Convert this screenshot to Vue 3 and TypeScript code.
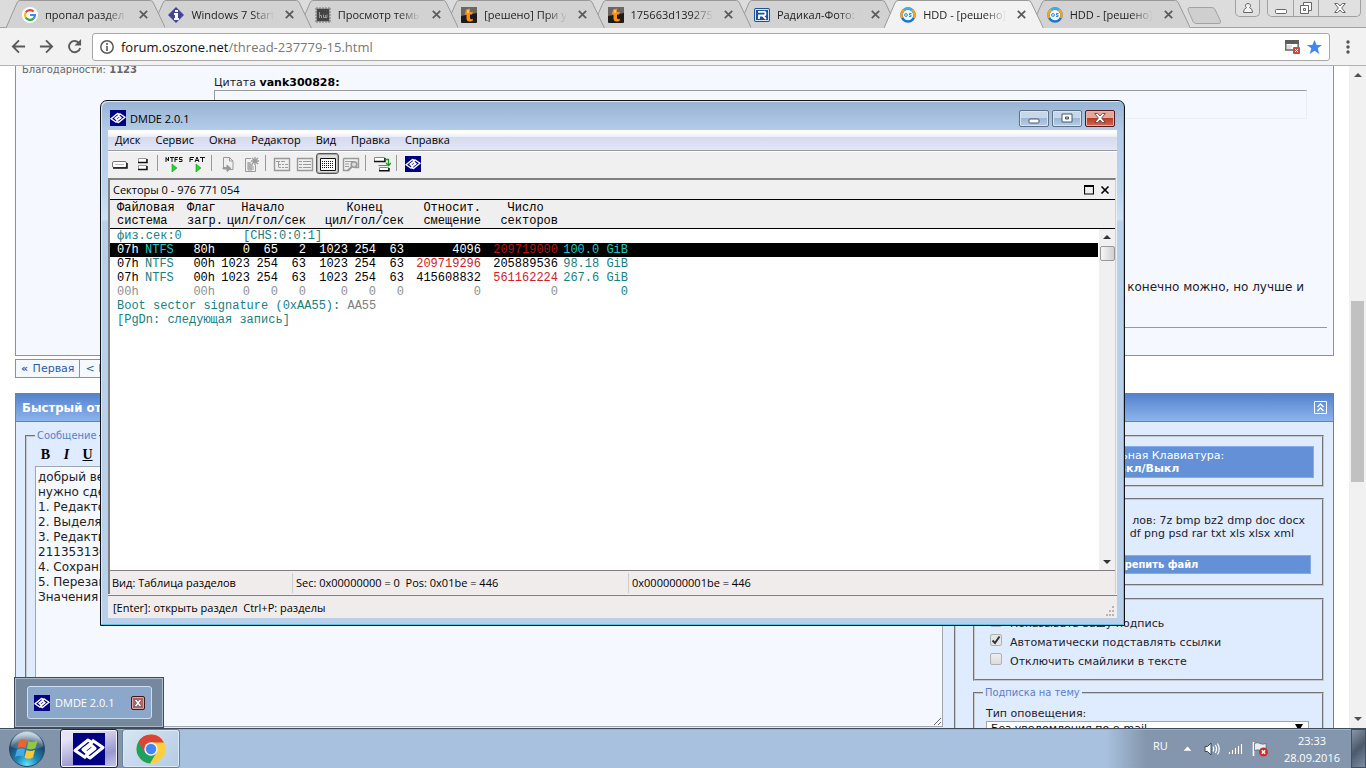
<script setup lang="ts">
import { ref } from 'vue'

interface Tab { title: string; icon: string; active?: boolean }
interface Cell { t: string; c?: string }

const tabs: Tab[] = [
  { title: 'пропал раздел ж', icon: 'google' },
  { title: 'Windows 7 Start', icon: 'info' },
  { title: 'Просмотр темы', icon: 'chip' },
  { title: '[решено] При ус', icon: 'torrent' },
  { title: '175663d139275', icon: 'torrent' },
  { title: 'Радикал-Фото: К', icon: 'radikal' },
  { title: 'HDD - [решено]', icon: 'os', active: true },
  { title: 'HDD - [решено]', icon: 'os' },
]

const menu: string[] = ['Диск', 'Сервис', 'Окна', 'Редактор', 'Вид', 'Правка', 'Справка']

const tools: string[] = [
  'drive', 'drives', '|', 'ntfs', 'fat', '|', 'doc', 'newdoc', '|',
  'tree', 'list', 'grid', 'find', '|', 'transfer', '|', 'logo',
]

const rows: { kind: string; cells: Cell[] }[] = [
  {
    kind: 'selected',
    cells: [{ t: '07h' }, { t: 'NTFS', c: 'fs' }, { t: '80h' }, { t: '0' }, { t: '65' }, { t: '2' }, { t: '1023' }, { t: '254' }, { t: '63' }, { t: '4096' }, { t: '209719000', c: 'bad' }, { t: '100.0 GiB', c: 'size' }],
  },
  {
    kind: '',
    cells: [{ t: '07h' }, { t: 'NTFS', c: 'fs' }, { t: '00h' }, { t: '1023' }, { t: '254' }, { t: '63' }, { t: '1023' }, { t: '254' }, { t: '63' }, { t: '209719296', c: 'bad' }, { t: '205889536' }, { t: '98.18 GiB', c: 'size' }],
  },
  {
    kind: '',
    cells: [{ t: '07h' }, { t: 'NTFS', c: 'fs' }, { t: '00h' }, { t: '1023' }, { t: '254' }, { t: '63' }, { t: '1023' }, { t: '254' }, { t: '63' }, { t: '415608832' }, { t: '561162224', c: 'bad' }, { t: '267.6 GiB', c: 'size' }],
  },
  {
    kind: 'empty',
    cells: [{ t: '00h' }, { t: '' }, { t: '00h' }, { t: '0' }, { t: '0' }, { t: '0' }, { t: '0' }, { t: '0' }, { t: '0' }, { t: '0' }, { t: '0' }, { t: '0', c: 'size' }],
  },
]

const url = ref('forum.oszone.net/thread-237779-15.html')
const message = ref(`добрый вечер
нужно сделать
1. Редактор
2. Выделяем
3. Редактируем
211353130
4. Сохраняем
5. Перезагрузка
Значения`)
const showSignature = ref(false)
const autoLinks = ref(true)
const noSmiles = ref(false)
</script>

<template>
  <div class="screen">
    <svg class="defs" aria-hidden="true">
      <defs>
        <symbol id="dmde" viewBox="0 0 32 32">
          <rect width="32" height="32" fill="#000083" />
          <g fill="none" stroke="#fff" stroke-width="3" stroke-linejoin="round">
            <path d="M13 25 2 17.500 15 7 19 9.500 10 16.500 14 20 21 14.500" />
            <path d="M19 7 30 14.500 17 25 13 22.500 22 15.500 18 12 11 17.500" />
          </g>
        </symbol>
      </defs>
    </svg>

    <header class="tabstrip">
      <nav class="tabs" aria-label="Вкладки">
        <div v-for="(tab, i) in tabs" :key="i" class="tab" :class="{ active: tab.active }" :style="{ zIndex: tab.active ? 20 : 10 - i }">
          <svg class="shape" viewBox="0 0 160 28" preserveAspectRatio="none" aria-hidden="true">
            <path d="M0 28 L11 3 Q12 1 14 1 H145 Q147 1 148 3 L160 28Z" :fill="tab.active ? '#f2f2f2' : '#d2d2d2'" />
            <path d="M0 28 L11 3 Q12 .5 14 .5 H145 Q147 .5 148 3 L160 28" fill="none" stroke="#999" />
          </svg>
          <svg class="favicon" viewBox="0 0 16 16" aria-hidden="true">
            <template v-if="tab.icon === 'google'">
              <circle cx="8" cy="8" r="8" fill="#fff" />
              <g fill="none" stroke-width="2.2">
                <path d="M11.6 4.6A5 5 0 0 0 3.7 5.5" stroke="#ea4335" />
                <path d="M3.7 5.5a5 5 0 0 0 0 5" stroke="#fbbc05" />
                <path d="M3.7 10.500a5 5 0 0 0 7.7 1.100" stroke="#34a853" />
                <path d="M11.400 11.600A5 5 0 0 0 13 8H8" stroke="#4285f4" />
              </g>
            </template>
            <template v-else-if="tab.icon === 'info'">
              <path d="M8 0 16 8 8 16 0 8Z" fill="#45439a" />
              <path d="M7 3h3v2H7zM6 6h4v5h1v2H6v-2h1V8H6z" fill="#fff" />
            </template>
            <template v-else-if="tab.icon === 'chip'">
              <path d="M2 0v16M5 0v16M8 0v16M11 0v16M14 0v16M0 2h16M0 5h16M0 8h16M0 11h16M0 14h16" stroke="#777" />
              <rect x="2" y="2" width="12" height="12" fill="#444" />
              <path d="M4.500 5v6M4.500 8.500h2V11M8.500 7.500V10.500h3.500V7.500M10.500 8v2" fill="none" stroke="#999" />
            </template>
            <template v-else-if="tab.icon === 'torrent'">
              <rect width="16" height="16" rx="1" fill="#1d1a18" />
              <path d="M0 0h16v6L0 9z" fill="#6b6661" />
              <path d="M5 2.500 9 1.500V5h3l-1 2.500H9V11q.5 2 3 .8L11.500 14Q5.500 16 5.500 11V7.500H3.500L4.500 5z" fill="#f78f1e" />
              <path d="M7 3v3" stroke="#fff2c0" />
            </template>
            <template v-else-if="tab.icon === 'radikal'">
              <rect y="1" width="16" height="14" rx="2" fill="#1d5294" />
              <path d="M1.500 2.500h13v11h-13z" fill="none" stroke="#dce6f2" />
              <path d="M5 12V8.500h5q1.500 0 1.500-2T10 4.800H4M8.500 8.500 12 12" fill="none" stroke="#fff" stroke-width="1.800" />
            </template>
            <template v-else>
              <circle cx="8" cy="8" r="6.500" fill="#eef7fd" stroke="#1976c9" stroke-width="2.500" />
              <path d="M1.500 8a6.500 6.500 0 0 1 13 0" fill="none" stroke="#3bb0e5" stroke-width="2.500" />
              <path d="M2.200 11A6.500 6.500 0 0 1 4 2.800M12 2.800a6.500 6.500 0 0 1 1.800 8.200" fill="none" stroke="#f9a11b" stroke-width="2.500" />
              <circle cx="6" cy="8" r="1.400" fill="none" stroke="#3a88c8" />
              <path d="M11.500 6.500H9.500V8h1.500v1.500H9" fill="none" stroke="#3a88c8" />
            </template>
          </svg>
          <span class="tab-title">{{ tab.title }}</span>
          <button class="tab-close" aria-label="Закрыть вкладку">
            <svg viewBox="0 0 9 9"><path d="M.8.8 8.200 8.200M8.200.8.8 8.200" stroke="#5a5a5a" stroke-width="1.700" /></svg>
          </button>
        </div>
      </nav>
      <button class="newtab" aria-label="Новая вкладка">
        <svg viewBox="0 0 35 17"><path d="M3 .5H25Q27 .5 28 2.500L33.500 14Q34 16.500 32 16.500H9Q7 16.500 6 14.500L1 3Q.5.500 3 .5Z" fill="#cfcfcf" stroke="#a3a3a3" /></svg>
      </button>
      <div class="win-controls">
        <button class="user" aria-label="Профиль">
          <svg viewBox="0 0 12 12"><path d="M6 1.500a2.300 2.300 0 0 1 1.500 4.200Q10.500 6.500 10.500 10.500H1.500Q1.500 6.500 4.500 5.700A2.300 2.300 0 0 1 6 1.500Z" fill="#f4f4f4" stroke="#666" /></svg>
        </button>
        <div class="group">
          <button aria-label="Свернуть"><svg viewBox="0 0 12 12"><rect x=".5" y="7.500" width="11" height="4" rx="1" fill="#fff" stroke="#666" /></svg></button>
          <button aria-label="Восстановить"><svg viewBox="0 0 12 12"><path d="M3.500.500h8v8h-8z" fill="#fff" stroke="#666" /><path d="M.5 3.500h8v8h-8zM3.500 6.500h2v2h-2z" fill="#fff" stroke="#666" /></svg></button>
          <button class="wide" aria-label="Закрыть"><svg viewBox="0 0 12 12"><path d="M.7 1.500h3L6 4l2.300-2.500h3L7.600 6l3.700 4.500h-3L6 8l-2.300 2.500h-3L4.400 6Z" fill="#fff" stroke="#666" /></svg></button>
        </div>
      </div>
    </header>

    <div class="toolbar">
      <button aria-label="Назад"><svg viewBox="0 0 16 16"><path d="M15 8H2.500M8.500 1.500 2 8l6.500 6.500" fill="none" stroke="#5a5a5a" stroke-width="2" /></svg></button>
      <button aria-label="Вперёд"><svg viewBox="0 0 16 16"><path d="M1 8h12.500M7.500 1.500 14 8l-6.500 6.500" fill="none" stroke="#5a5a5a" stroke-width="2" /></svg></button>
      <button aria-label="Обновить"><svg viewBox="0 0 16 16"><path d="M13 4.500A6 6 0 1 0 14 9.500" fill="none" stroke="#5a5a5a" stroke-width="2" /><path d="M15 0v7H8z" fill="#5a5a5a" /></svg></button>
      <div class="omnibox">
        <svg class="info" viewBox="0 0 14 14" aria-hidden="true"><circle cx="7" cy="7" r="6.200" fill="none" stroke="#5a5a5a" stroke-width="1.500" /><path d="M7 3v2M7 6v5" stroke="#5a5a5a" stroke-width="1.600" /></svg>
        <a class="url" href="#" :aria-label="url"><span>forum.oszone.net</span>/thread-237779-15.html</a>
        <svg class="popup" viewBox="0 0 15 14" aria-hidden="true"><path d="M.8 1h12.400v9H.8z" fill="#fff" stroke="#666" stroke-width="1.500" /><path d="M0 0h14v4H0z" fill="#5c5c5c" /><path d="M2 6h5M2 8h4" stroke="#bbb" /><rect x="8" y="7" width="7" height="7" rx="1" fill="#d3453d" /><path d="m10 9 3 3m0-3-3 3" stroke="#fff" /></svg>
        <svg class="star" viewBox="0 0 15 14" aria-hidden="true"><path d="m7.500 0 2.100 5H15l-4.300 3.300L12.300 14 7.500 10.700 2.700 14l1.600-5.700L0 5h5.400Z" fill="#4285f4" /></svg>
      </div>
      <button class="more" aria-label="Меню"><svg viewBox="0 0 4 14"><circle cx="2" cy="2" r="1.700" /><circle cx="2" cy="7" r="1.700" /><circle cx="2" cy="12" r="1.700" /></svg></button>
    </div>

    <div class="viewport">
      <main class="forum">
        <article class="post">
          <aside>Благодарности: <b>1123</b></aside>
          <div class="post-body">
            <p>Цитата <b>vank300828:</b></p>
            <blockquote></blockquote>
            <p class="tail">конечно можно, но лучше и</p>
            <hr />
          </div>
        </article>
        <nav class="pager" aria-label="Страницы"><a href="#"><b>«</b> Первая</a><a href="#">&lt; Предыдущая</a></nav>
        <section class="reply">
          <h2>Быстрый ответ
            <button aria-label="Свернуть форму"><svg viewBox="0 0 13 13"><path d="M.5.500h12v12H.5z" fill="none" stroke="#fff" /><path d="m3.500 6 3-3 3 3M3.500 10l3-3 3 3" fill="none" stroke="#fff" stroke-width="1.300" /></svg></button>
          </h2>
          <form class="reply-grid" @submit.prevent>
            <fieldset class="compose">
              <legend><label for="msg">Сообщение</label></legend>
              <div class="format"><button type="button"><b>B</b></button><button type="button"><i>I</i></button><button type="button"><u>U</u></button></div>
              <textarea id="msg" v-model="message" spellcheck="false"></textarea>
            </fieldset>
            <div class="options">
              <fieldset class="kbd">
                <button type="button">Виртуальная Клавиатура:<b>Вкл/Выкл</b></button>
              </fieldset>
              <fieldset class="files">
                <p>лов: 7z bmp bz2 dmp doc docx</p>
                <p class="second">df png psd rar txt xls xlsx xml</p>
                <button type="button">Прикрепить файл</button>
              </fieldset>
              <fieldset class="checks">
                <label><input v-model="showSignature" type="checkbox" />Показывать вашу подпись</label>
                <label><input v-model="autoLinks" type="checkbox" />Автоматически подставлять ссылки</label>
                <label><input v-model="noSmiles" type="checkbox" />Отключить смайлики в тексте</label>
              </fieldset>
              <fieldset class="subscribe">
                <legend>Подписка на тему</legend>
                <label for="notify">Тип оповещения:</label>
                <div class="select">
                  <select id="notify"><option>Без уведомления по e-mail</option></select>
                  <svg viewBox="0 0 8 7" aria-hidden="true"><path d="M0 0h8L4 7z" /></svg>
                </div>
              </fieldset>
            </div>
          </form>
        </section>
      </main>
      <div class="page-scroll" aria-hidden="true">
        <svg viewBox="0 0 8 4"><path d="M4 0 8 4H0z" /></svg>
        <div class="track"><div class="thumb"></div></div>
        <svg viewBox="0 0 8 4"><path d="M0 0h8L4 4z" /></svg>
      </div>
    </div>

    <footer class="taskbar">
      <button class="start" aria-label="Пуск">
        <svg viewBox="0 0 38 38">
          <defs>
            <radialGradient id="orb" cx=".5" cy=".95" r=".9"><stop offset="0" stop-color="#5fe3fa" /><stop offset=".35" stop-color="#1b88b8" /><stop offset=".75" stop-color="#1b4569" /><stop offset="1" stop-color="#8fb0c8" /></radialGradient>
            <linearGradient id="gloss" x1="0" y1="0" x2="0" y2="1"><stop offset="0" stop-color="#fff" stop-opacity=".6" /><stop offset="1" stop-color="#fff" stop-opacity=".1" /></linearGradient>
          </defs>
          <circle cx="19" cy="19" r="17.500" fill="url(#orb)" stroke="#2d4862" />
          <path d="M3 17a16 16 0 0 1 32 0q-16 5-32 0Z" fill="url(#gloss)" />
          <path d="M11 10.500q4-2.500 8 0L17.500 18q-4-2-8 0Z" fill="#f0622a" />
          <path d="M20.500 11q4 2 9-.5L27.500 18q-4 2.500-8.500.5Z" fill="#93c83e" />
          <path d="M9 19.500q4-2 8 0L15.500 27q-4-2.500-8.500 0Z" fill="#47a8e8" />
          <path d="M18.500 20q4.500 2 8.500-.3L25 27.500q-4 2.500-8.500 0Z" fill="#fdc82f" />
        </svg>
      </button>
      <button class="task dmde" aria-label="DMDE 2.0.1"><svg viewBox="0 0 32 32"><use href="#dmde" /></svg></button>
      <button class="task" aria-label="Google Chrome">
        <svg viewBox="0 0 32 32">
          <circle cx="16" cy="16" r="14.500" fill="#fdcf3e" />
          <path d="M3.400 8.800A14.500 14.500 0 0 0 15 30.500L21.500 19.500 16 16Z" fill="#1aa260" />
          <path d="M3.400 8.800 9.800 19.500 16 16V9.400h12.900A14.500 14.500 0 0 0 3.400 8.800Z" fill="#db4437" />
          <circle cx="16" cy="16" r="6.700" fill="#f4f4f4" /><circle cx="16" cy="16" r="5.200" fill="#4285f4" />
        </svg>
      </button>
      <div class="tray">
        <span class="lang">RU</span>
        <svg class="up" viewBox="0 0 9 5"><path d="M4.500 0 9 5H0z" fill="#fff" stroke="#566" stroke-width=".4" /></svg>
        <svg class="ti" viewBox="0 0 16 16"><path d="M1 5.500h2.500L7 2v12l-3.500-3.500H1z" fill="#fff" stroke="#3b4653" /><path d="M9 5.500q1.500 2.500 0 5M11.300 4q2.500 4 0 8M13.500 2.500q3.500 5.500 0 11" fill="none" stroke="#fff" stroke-width="1.200" /></svg>
        <svg class="ti" viewBox="0 0 16 16"><path d="M.5 10.500h2v3h-2zM3.500 8.500h2v5h-2zM6.500 6.500h2v7h-2zM9.500 4.500h2v9h-2zM12.500 2.500h2v11h-2z" fill="#fff" stroke="#45505e" stroke-width=".4" /></svg>
        <svg class="ti" viewBox="0 0 16 16"><path d="M1.500 1v14" stroke="#fff" stroke-width="1.600" /><path d="M2.500 2.500q3-1.500 5.500 0t6 0v7q-3 1.500-5.500 0t-6 0Z" fill="#e8eef4" stroke="#4d5866" stroke-width=".6" /><circle cx="11.500" cy="11" r="4.500" fill="#d42a2a" /><path d="m9.800 9.300 3.400 3.400m0-3.400-3.400 3.400" stroke="#fff" stroke-width="1.400" /></svg>
        <time>23:33<br />28.09.2016</time>
      </div>
      <button class="show-desktop" aria-label="Свернуть все окна"></button>
    </footer>

    <section class="window" aria-label="DMDE 2.0.1">
      <div class="titlebar">
        <svg class="logo16" viewBox="0 0 32 32"><use href="#dmde" /></svg>
        <h1>DMDE 2.0.1</h1>
        <button aria-label="Свернуть"><svg viewBox="0 0 12 12"><rect x="1" y="7" width="10" height="4" rx="1" fill="#fff" stroke="#4a5568" /></svg></button>
        <button aria-label="Развернуть"><svg viewBox="0 0 12 12"><path d="M1 2h10v8H1zM4.500 5h3v2h-3z" fill="#fff" fill-rule="evenodd" stroke="#4a5568" /></svg></button>
        <button class="close" aria-label="Закрыть"><svg viewBox="0 0 12 12"><path d="M.7 1.500h3L6 4l2.300-2.500h3L7.600 6l3.700 4.500h-3L6 8l-2.300 2.500h-3L4.400 6Z" fill="#fff" stroke="#5d3535" stroke-width=".8" /></svg></button>
      </div>
      <div class="client">
        <nav class="menubar"><button v-for="m in menu" :key="m">{{ m }}</button></nav>
        <div class="tools" role="toolbar" aria-label="Инструменты">
          <template v-for="(t, i) in tools" :key="i">
            <span v-if="t === '|'" class="sep"></span>
            <button v-else :class="{ pressed: t === 'grid' }" :aria-label="t">
              <svg v-if="t === 'logo'" class="mark" viewBox="0 0 32 32"><use href="#dmde" /></svg>
              <svg v-else viewBox="0 0 18 16">
                <g v-if="t === 'drive'"><rect x="1.500" y="5.500" width="14" height="6" rx="1.500" fill="#fff" stroke="#777" /><path d="M2 12h14V7" fill="none" stroke="#111" stroke-width="1.500" /><path d="M4 8.500h9" stroke="#b5c0b5" /></g>
                <g v-else-if="t === 'drives'"><path d="M4.500 2.500h8v4h-8zM4.500 9.500h8v4h-8z" fill="#fff" stroke="#999" /><path d="M4 6.500h9V3M4 13.500h9V10" fill="none" stroke="#111" stroke-width="1.500" /></g>
                <g v-else-if="t === 'ntfs'"><path d="M1 6V1.500L3.500 5V1M5 1.500h4M7 1.500V6M10 6V1.500h3M10 3.500h2.500M17.500 1.500h-3v2h2.500v2h-3" fill="none" stroke="#111" /><path d="m7 8 5 4-5 4z" fill="#1fdc2a" stroke="#167a1d" stroke-width=".5" /></g>
                <g v-else-if="t === 'fat'"><path d="M2 6V1.500h4M2 3.500h3M7 6 9 1l2 5M8 4.500h2.500M12 1.500h5M14.500 1.500V6" fill="none" stroke="#111" /><path d="m8 8 5 4-5 4z" fill="#1fdc2a" stroke="#167a1d" stroke-width=".5" /></g>
                <g v-else-if="t === 'doc'" fill="none" stroke="#999"><path d="M4.500 11V1.500h6l3.500 3.500v8.500h-4" /><path d="M10.500 1.500V5H14" /><path d="M4 11.500h4V9l4 3.500-4 3v-2.500H4Z" fill="#999" /></g>
                <g v-else-if="t === 'newdoc'" fill="none" stroke="#999"><path d="M9 2.500H3.500v13h10V9" /><path d="M13 1v8M9 5h8M10 2l6 6M16 2l-6 6" stroke-width="1.300" /><path d="M5 7h4M5 9h6M5 11h7M5 13h7M7 6v9M9 8v7" /></g>
                <g v-else-if="t === 'tree'" fill="none" stroke="#999"><path d="M1.500 2.500h15v12h-15z" stroke-width="1.400" /><path d="M3 5.500h4M8 5.500h4M5.500 6v5.500M6 8.500h2M6 11.500h2M9 8.500h2M9 11.500h2M12 8.500h3M12 11.500h3" /></g>
                <g v-else-if="t === 'list'" fill="none" stroke="#999"><path d="M1.500 2.500h15v12h-15z" stroke-width="1.400" /><path d="M3 5.500h3M7 5.500h8M3 8.500h3M7 8.500h8M3 11.500h3M7 11.500h8" /></g>
                <g v-else-if="t === 'grid'" fill="none" stroke="#111"><rect x="1" y="2" width="16" height="13" fill="#fff" stroke="none" /><path d="M1.500 2.500h15v12h-15z" /><path d="M3 5.500h12M3 7.500h12M3 9.500h12M3 11.500h12" stroke-dasharray="1 1" /></g>
                <g v-else-if="t === 'find'" fill="none" stroke="#999"><path d="M1.500 2.500h15v9h-4M1.500 2.500v12H7" stroke-width="1.400" /><path d="M3 5.500h8M3 8h4M3 10.500h4" /><circle cx="12" cy="8.500" r="2.800" fill="#ddd" stroke-width="1.600" /><path d="m10 10.500-4 4" stroke-width="2.200" /></g>
                <g v-else><path d="M1.500 1.500h10v4h-10zM6.500 11.500h9v3h-9z" fill="#fff" stroke="#888" /><path d="M1 5.500h11V2M6 14.700h10V12" fill="none" stroke="#111" stroke-width="1.500" /><path d="M12 3.500h3.500V9M13 7l2.500 2.500L18 7" fill="none" stroke="#1a991f" stroke-width="1.300" /><path d="M5.500 9.500h9" stroke="#777" /></g>
              </svg>
            </button>
          </template>
        </div>
        <div class="pane">
          <div class="pane-title">
            <span>Секторы 0 - 976 771 054</span>
            <button aria-label="Развернуть панель"><svg viewBox="0 0 10 10"><path d="M.5.500h9v8.500h-9zM0 1.500h10" fill="none" stroke="#000" stroke-width="1.200" /></svg></button>
            <button aria-label="Закрыть панель"><svg viewBox="0 0 10 10"><path d="m1.500 1.500 7 7m0-7-7 7" stroke="#000" stroke-width="1.600" /></svg></button>
          </div>
          <div class="sectors">
            <table>
              <colgroup>
                <col class="w35" /><col class="w42" /><col class="w28" />
                <col class="w35" /><col class="w28" /><col class="w28" />
                <col class="w42" /><col class="w28" /><col class="w28" />
                <col class="w77" /><col class="w77" /><col class="w70" /><col />
              </colgroup>
              <thead>
                <tr>
                  <th colspan="2" class="left">Файловая<br />система</th>
                  <th class="left">Флаг<br />загр.</th>
                  <th colspan="3">Начало&nbsp;&nbsp;&nbsp;<br />цил/гол/сек</th>
                  <th colspan="3">Конец&nbsp;&nbsp;&nbsp;<br />цил/гол/сек</th>
                  <th>Относит.<br />смещение</th>
                  <th>Число&nbsp;&nbsp;<br />секторов</th>
                  <th colspan="2"></th>
                </tr>
              </thead>
              <tbody>
                <tr class="note"><td colspan="3">физ.сек:0</td><td colspan="10" class="chs">[CHS:0:0:1]</td></tr>
                <tr v-for="(r, i) in rows" :key="i" :class="r.kind">
                  <td v-for="(c, j) in r.cells" :key="j" :class="c.c">{{ c.t }}</td>
                  <td></td>
                </tr>
                <tr class="note"><td colspan="13">Boot sector signature (0xAA55): <span>AA55</span></td></tr>
                <tr class="note"><td colspan="13">[PgDn: следующая запись]</td></tr>
              </tbody>
            </table>
            <div class="pane-scroll" aria-hidden="true">
              <svg viewBox="0 0 8 4"><path d="M4 0 8 4H0z" /></svg>
              <div class="thumb"></div>
              <svg viewBox="0 0 8 4"><path d="M0 0h8L4 4z" /></svg>
            </div>
          </div>
          <div class="pane-status"><span>Вид: Таблица разделов</span><span>Sec: 0x00000000 = 0&nbsp; Pos: 0x01be = 446</span><span>0x0000000001be = 446</span></div>
        </div>
        <div class="statusbar">[Enter]: открыть раздел&nbsp; Ctrl+P: разделы
          <svg viewBox="0 0 10 10" aria-hidden="true"><path d="M7 0h2v2H7zM4 4h2v2H4zM7 4h2v2H7zM1 8h2v2H1zM4 8h2v2H4zM7 8h2v2H7z" fill="#b9b4b4" /></svg>
        </div>
      </div>
    </section>

    <div class="preview">
      <div class="preview-item">
        <svg class="logo16" viewBox="0 0 32 32"><use href="#dmde" /></svg>
        <span>DMDE 2.0.1</span>
        <button aria-label="Закрыть окно"><svg viewBox="0 0 12 12"><path d="M2 2.500h2.500L6 4.300l1.500-1.800H10L7.300 6 10 9.500H7.500L6 7.700 4.500 9.500H2L4.700 6Z" fill="#fff" stroke="#333" stroke-width=".5" /></svg></button>
      </div>
    </div>
  </div>
</template>

<style>
body { overflow: hidden; }
</style>

<style scoped>
.screen {
  position: relative; display: flex; flex-direction: column; height: 100vh; overflow: hidden; background: #fff;
  font-family: "Open Sans", "Noto Sans", sans-serif; font-size: 11px; color: #000;
}
.screen *, .screen *::before { box-sizing: border-box; }
.defs { position: absolute; width: 0; height: 0; }
button { font: inherit; color: inherit; background: none; border: 0; padding: 0; margin: 0; display: flex; align-items: center; justify-content: center; }
svg { display: block; flex: none; }
p, h1, h2 { margin: 0; }

.tabstrip { flex: none; height: 28px; display: flex; background: #dcdcdc; padding-left: 6px; position: relative; border-bottom: 1px solid #a3a3a3; }
.tabs { flex: 0 1 1171px; min-width: 0; display: flex; height: 28px; }
.tab { position: relative; flex: 1 1 0; min-width: 0; display: flex; align-items: center; padding: 1px 0 0 16px; height: 28px; color: #222; }
.tab .shape { position: absolute; left: 0; top: 0; width: calc(100% + 13px); height: 28px; }
.tab .favicon { position: relative; width: 16px; height: 16px; margin-right: 7px; }
.tab-title { position: relative; flex: 1; min-width: 0; overflow: hidden; white-space: nowrap; mask-image: linear-gradient(90deg, #000 72%, transparent 98%); }
.tab-close { position: relative; width: 18px; height: 18px; margin-left: 5px; }
.tab-close svg { width: 9px; height: 9px; }
.newtab { margin: 7px 0 0 10px; align-self: flex-start; flex: none; }
.newtab svg { width: 35px; height: 17px; }
.win-controls { margin-left: auto; display: flex; gap: 7px; margin-right: 5px; height: 17px; }
.win-controls .user, .win-controls .group { border: 1px solid #a0a0a0; border-top: 0; border-radius: 0 0 5px 5px; height: 17px; background: #e0e0e0; }
.win-controls .user { width: 25px; }
.group { display: flex; }
.group button { width: 25px; border-left: 1px solid #a0a0a0; }
.group button:first-child { border-left: 0; }
.group .wide { width: 42px; }
.win-controls svg { width: 12px; height: 12px; }

.toolbar { flex: none; height: 38px; background: #f2f2f2; border-bottom: 1px solid #b3b3b3; display: flex; align-items: center; padding-left: 4px; }
.toolbar > button { width: 28px; height: 28px; }
.toolbar > button svg { width: 15px; height: 15px; }
.omnibox { flex: 1; margin-left: 4px; height: 28px; border: 1px solid #a8a8a8; border-radius: 3px; background: #fff; display: flex; align-items: center; padding: 0 7px; }
.omnibox .info { width: 14px; height: 14px; margin-right: 7px; }
.url { flex: 1; font-size: 13px; color: #777; text-decoration: none; }
.url span { color: #111; }
.popup { width: 15px; height: 14px; margin-right: 7px; }
.star { width: 15px; height: 14px; }
.toolbar > .more { width: 36px; }
.toolbar > .more svg { width: 4px; height: 14px; fill: #555; }

.viewport { flex: 1; min-height: 0; display: flex; overflow: hidden; background: #fff; }
.forum { flex: 1; min-width: 0; margin-top: -20px; padding: 0 15px; font-family: "DejaVu Sans", sans-serif; font-size: 11px; line-height: 14px; color: #1c1c2c; }
.post { display: grid; grid-template-columns: 192px 1fr; background: #f5f8fe; border: 1px solid #6f98c6; padding: 0 6px 27px; }
.post aside { padding-top: 16px; font-size: 10px; color: #666; }
.post-body { padding-top: 29px; }
.post-body b { color: #000; }
blockquote { margin: 0 20px 0 0; height: 29px; border: 1px solid #eceef2; border-top-color: #999; border-left-color: #999; }
.tail { margin-top: 161px; padding-right: 23px; text-align: right; font-size: 12px; }
hr { margin: 33px 0 0; border: 0; border-top: 1px solid #999; }
.pager { display: flex; margin-top: 3px; }
.pager a { border: 1px solid #6f98c6; background: #f5f8fe; padding: 1px 5px; margin-right: -1px; line-height: 15px; color: #2a5dab; text-decoration: none; }
.pager b { margin-right: 1px; }
.reply { margin-top: 15px; border: 1px solid #5584c8; background: #dfebfe; }
.reply h2 { height: 28px; display: flex; align-items: center; justify-content: space-between; padding: 0 6px; background: linear-gradient(#5483cc, #8db3ec); border-bottom: 1px solid #5584c8; color: #fff; font: bold 13px "DejaVu Sans Condensed", "DejaVu Sans", sans-serif; }
.reply h2 svg { width: 13px; height: 13px; }
.reply-grid { display: grid; grid-template-columns: 1fr 351px; gap: 17px; padding: 7px 9px; }
fieldset { margin: 0; min-width: 0; border: 2px groove #c8c8c8; padding: 0; }
legend { padding: 0 2px; font-family: "DejaVu Sans Condensed", sans-serif; color: #5a80cc; }
.compose { padding: 0 11px 10px 8px; }
.format { display: flex; height: 23px; align-items: center; padding-top: 1px; }
.format button { width: 21px; font: bold 14px "Liberation Serif", serif; color: #000; }
textarea { display: block; width: 100%; height: 261px; border: 1px solid #a0a6ae; background: #f5f8fe; padding: 3px 2px 2px; font: 12px/15px "DejaVu Sans", sans-serif; color: #222; overflow: hidden; margin: 0; }
.options { padding-top: 6px; display: flex; flex-direction: column; }
.kbd { padding: 9px 8px 7px; }
.kbd button, .files button { width: 100%; background: #6390d6; border: 1px solid #86abe4; color: #fff; line-height: 13px; }
.kbd button { flex-direction: column; height: 32px; }
.files { margin-top: 11px; padding: 14px 11px 10px 8px; line-height: 13px; }
.files p { text-align: right; padding-right: 6px; }
.files .second { padding-right: 17px; }
.files button { margin-top: 15px; height: 19px; font: bold 11px "DejaVu Sans Condensed", sans-serif; }
.checks { margin-top: 12px; padding: 14px 8px 8px 15px; }
.checks label { display: flex; align-items: center; height: 19px; }
input[type="checkbox"] { appearance: none; width: 12px; height: 12px; margin: 0 8px 6px 0; border: 1px solid #b0b0b0; border-radius: 2px; background: linear-gradient(#eee, #dcdcdc); }
input[type="checkbox"]:checked { background: url("data:image/svg+xml,%3Csvg xmlns='http://www.w3.org/2000/svg' viewBox='0 0 10 10'%3E%3Cpath d='M1.500 5.500 4 8 8.500 1.500' fill='none' stroke='%23333' stroke-width='2'/%3E%3C/svg%3E") #e6e6e6; }
.subscribe { margin-top: 5px; padding: 7px 13px 12px 11px; }
.subscribe legend { margin-left: -3px; }
.subscribe label { display: block; }
.select { position: relative; }
select { display: block; appearance: none; width: 100%; height: 16px; border: 1px solid #a6a6a6; background: #fff; font: 11px/14px "DejaVu Sans", sans-serif; padding: 0 4px; color: #111; }
.select svg { position: absolute; right: 6px; top: 3px; width: 8px; height: 7px; }
.page-scroll { width: 17px; background: #f1f1f1; display: flex; flex-direction: column; align-items: center; padding: 7px 0; }
.page-scroll svg { width: 8px; height: 4px; fill: #505050; }
.track { flex: 1; align-self: stretch; padding: 224px 2px 0; }
.track .thumb { height: 181px; background: #c1c1c1; }

.taskbar { flex: none; height: 40px; display: flex; align-items: stretch; border-top: 1px solid #3f4a5a; background: linear-gradient(90deg, #8294aa 0, #8294aa 120px, #a8c1de 180px, #a8c1de calc(100% - 260px), #8496ad calc(100% - 220px)); box-shadow: inset 0 1px #9fb3c9; }
.start { width: 38px; margin: 1px 14px 0 8px; }
.start svg { width: 38px; height: 38px; }
.task { width: 58px; margin-right: 4px; border: 1px solid #6d809a; border-radius: 3px; background: linear-gradient(135deg, #d8e5f3, #b4cbe4); box-shadow: inset 0 0 0 1px #dce8f4; }
.task svg { width: 32px; height: 32px; }
.task.dmde { border-color: #20243a; background: linear-gradient(160deg, #e6e4f4 20%, #9a96d2 70%, #c7c6ea); box-shadow: inset 0 0 0 1px #f4f4fc; }
.tray { margin-left: auto; display: flex; align-items: center; color: #fff; }
.lang { margin-right: 15px; padding-bottom: 6px; }
.up { width: 9px; height: 5px; margin-right: 12px; }
.ti { width: 16px; height: 16px; margin-right: 8px; }
.tray time { margin-left: 8px; line-height: 17px; text-align: center; }
.show-desktop { width: 15px; margin-left: 11px; border: 1px solid #44505f; background: linear-gradient(135deg, #8896a8, #4c5a6c 50%, #7d8ea4); }

.window {
  position: absolute; left: 100px; right: 241px; top: 100px; bottom: 142px; display: flex; flex-direction: column;
  border: 1px solid #101418; border-radius: 7px 7px 0 0; padding: 0 7px 7px;
  background: linear-gradient(#98b3d3, #b4cce8 30px, #bdd5ef 90px, #cfe2f5 118px, #b9d0ea 121px, #b9d0ea);
  box-shadow: inset -1px -1px #5ec6e0, inset 1px 1px #dce9f6;
}
.titlebar { flex: none; height: 29px; display: flex; align-items: center; gap: 3px; padding: 5px 2px 0 2px; }
.logo16 { width: 16px; height: 16px; }
.titlebar h1 { flex: 1; font-size: 11px; font-weight: 400; }
.titlebar .logo16 { margin-right: 1px; }
.titlebar button { width: 30px; height: 17px; border: 1px solid #5c7089; border-radius: 2px; background: linear-gradient(#c6d7ea 45%, #9db7d4 50%, #b7cde6); box-shadow: inset 0 0 0 1px #d8e5f3; }
.titlebar button svg { width: 12px; height: 12px; }
.titlebar .close { border-color: #501a1e; background: linear-gradient(#e3a79c 45%, #b93c28 50%, #cf6a50); box-shadow: inset 0 0 0 1px #e6b5ac; }
.client { flex: 1; min-height: 0; display: flex; flex-direction: column; background: #f0f0f0; }
.menubar { flex: none; height: 21px; display: flex; background: linear-gradient(#fff 10%, #e9edf7 35%, #d5daee 36%, #e2e6f6); border-bottom: 1px solid #9b9b9b; }
.menubar button { padding: 0 8px 1px 7px; }
.tools { flex: none; height: 27px; display: flex; align-items: flex-start; border-top: 1px solid #fff; padding-top: 1px; }
.tools button { width: 23px; height: 21px; }
.tools svg { width: 18px; height: 16px; }
.tools .mark { width: 16px; }
.tools .pressed { border: 1px solid #555; border-radius: 3px; background: #dedede; box-shadow: inset 0 0 0 1px #aaa; }
.sep { width: 8px; height: 16px; border-left: 1px solid #999; margin: 2px -3px 0 3px; }
.pane { flex: 1; min-height: 0; margin-right: 1px; display: flex; flex-direction: column; border: 2px solid #808080; border-right: 1px solid #d0d0d0; border-bottom: 0; }
.pane-title { flex: none; height: 20px; display: flex; align-items: center; padding: 0 5px 0 3px; border-bottom: 1px solid #000; }
.pane-title span { flex: 1; }
.pane-title button { margin-left: 6px; }
.pane-title svg { width: 10px; height: 10px; }
.sectors { position: relative; flex: 1; min-height: 0; background: #fff; }
table { width: 100%; table-layout: fixed; border-spacing: 0; font: 12px/14px "Liberation Mono", monospace; }
.w28 { width: 28px; } .w35 { width: 35px; } .w42 { width: 42px; } .w70 { width: 70px; } .w77 { width: 77px; }
th, td { padding: 1px 0 0; height: 14px; line-height: 13px; text-align: right; white-space: nowrap; vertical-align: top; }
th { padding-top: 2px; font-weight: 400; background: #efefef; border-bottom: 1px solid #000; }
.left, td:first-child, td.fs, .note td { text-align: left; }
tr > :first-child { padding-left: 7px; }
.fs, .size, .note { color: #18807f; }
.bad { color: #d0202a; }
.note .chs { padding-left: 28px; }
.note span { color: #808080; }
.empty { color: #909090; }
.selected { background: #000; color: #fff; }
.selected .fs, .selected .size { color: #22c8c0; }
.selected .bad { color: #b01818; }
.pane-scroll { position: absolute; right: 0; top: 29px; bottom: 0; width: 17px; background: #f0f0f0; border-left: 1px solid #fff; display: flex; flex-direction: column; align-items: center; padding: 6px 0; }
.pane-scroll svg { width: 8px; height: 4px; fill: #333; }
.pane-scroll .thumb { width: 15px; height: 15px; margin: 7px 0 auto; border: 1px solid #999; border-radius: 2px; background: linear-gradient(90deg, #f6f6f6, #d0d0d0); }
.pane-status { flex: none; height: 24px; display: grid; grid-template-columns: 182px 336px 1fr; align-items: center; border-top: 1px solid #808080; background: #f0ecec; }
.pane-status span { padding: 0 3px; line-height: 20px; border-left: 1px solid #ccc; }
.pane-status span:first-child { border-left: 0; padding-left: 2px; }
.statusbar { flex: none; height: 23px; margin-top: 1px; display: flex; align-items: center; justify-content: space-between; padding: 0 2px 0 5px; border-top: 1px solid #808080; background: #f0ecec; }
.statusbar svg { width: 10px; height: 10px; align-self: flex-end; margin-bottom: 2px; }

.preview { position: absolute; left: 14px; bottom: 40px; width: 150px; height: 51px; border: 1px solid #3f4a5a; background: #75889e; box-shadow: inset 0 0 0 1px #a9b9cb; padding: 8px 11px 8px 12px; }
.preview-item { height: 100%; display: flex; align-items: center; gap: 5px; padding: 0 6px; border: 1px solid #cfdeee; border-radius: 3px; background: #8ba7c9; color: #fff; }
.preview-item span { flex: 1; }
.preview-item button { width: 14px; height: 14px; border: 1px solid #40191c; border-radius: 2px; background: #b7635e; box-shadow: inset 0 0 0 1px #d9a8a4; }
.preview-item button svg { width: 12px; height: 12px; }
</style>
